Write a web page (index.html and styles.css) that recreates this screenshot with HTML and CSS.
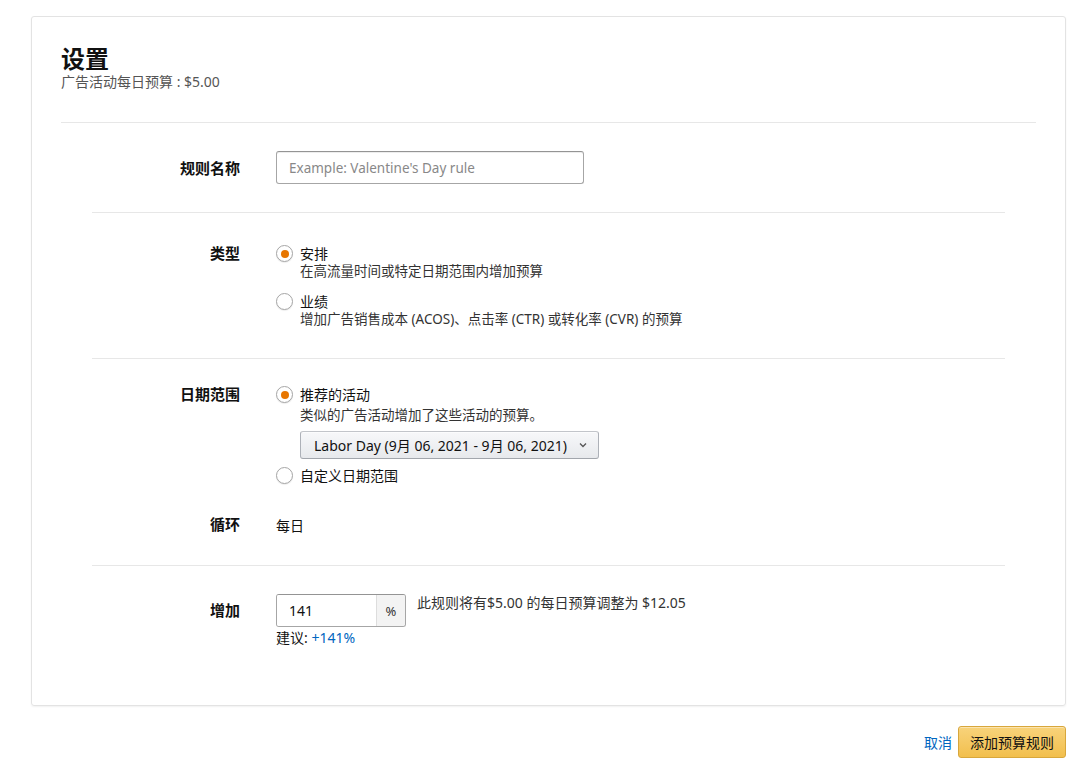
FILE: index.html
```html
<!DOCTYPE html>
<html lang="zh">
<head>
  <meta charset="UTF-8">
  <title>设置</title>
  <link rel="stylesheet" href="styles.css">
</head>
<body>
  <div class="page">
    <div class="card">
      <div class="card-head">
        <h2 class="title">设置</h2>
        <div class="subtitle">广告活动每日预算 : $5.00</div>
      </div>

      <div class="rows">
        <!-- 规则名称 -->
        <div class="row row-name">
          <div class="label">规则名称</div>
          <div class="field">
            <input class="text-input" type="text" placeholder="Example: Valentine's Day rule">
          </div>
        </div>

        <!-- 类型 -->
        <div class="row row-type">
          <div class="label">类型</div>
          <div class="field">
            <div class="radio-item">
              <span class="radio checked"></span>
              <div class="radio-text">
                <div class="radio-title">安排</div>
                <div class="radio-desc">在高流量时间或特定日期范围内增加预算</div>
              </div>
            </div>
            <div class="radio-item">
              <span class="radio"></span>
              <div class="radio-text">
                <div class="radio-title">业绩</div>
                <div class="radio-desc">增加广告销售成本 (ACOS)、点击率 (CTR) 或转化率 (CVR) 的预算</div>
              </div>
            </div>
          </div>
        </div>

        <!-- 日期范围 + 循环 -->
        <div class="row row-date">
          <div class="sub-row">
            <div class="label">日期范围</div>
            <div class="field">
              <div class="radio-item">
                <span class="radio checked"></span>
                <div class="radio-text">
                  <div class="radio-title">推荐的活动</div>
                  <div class="radio-desc">类似的广告活动增加了这些活动的预算。</div>
                  <div class="select">
                    <span>Labor Day (9月 06, 2021 - 9月 06, 2021)</span>
                    <svg class="chev" width="8" height="6" viewBox="0 0 8 6"><path d="M1 1.5 L4 4.5 L7 1.5" fill="none" stroke="#555" stroke-width="1.3"/></svg>
                  </div>
                </div>
              </div>
              <div class="radio-item">
                <span class="radio"></span>
                <div class="radio-text">
                  <div class="radio-title">自定义日期范围</div>
                </div>
              </div>
            </div>
          </div>
          <div class="sub-row repeat">
            <div class="label">循环</div>
            <div class="field value">每日</div>
          </div>
        </div>

        <!-- 增加 -->
        <div class="row row-inc">
          <div class="label">增加</div>
          <div class="field">
            <div class="inc-line">
              <div class="input-group">
                <input class="pct-input" type="text" value="141">
                <span class="addon">%</span>
              </div>
              <div class="inc-note">此规则将有$5.00 的每日预算调整为 $12.05</div>
            </div>
            <div class="suggest">建议: <a href="#">+141%</a></div>
          </div>
        </div>
      </div>
    </div>

    <div class="actions">
      <a class="cancel" href="#">取消</a>
      <button class="btn-primary">添加预算规则</button>
    </div>
  </div>
</body>
</html>
```

FILE: styles.css
```css
* { box-sizing: border-box; }
html, body { margin: 0; background: #fff; }
body {
  font-family: "Noto Sans", "Noto Sans CJK SC", sans-serif;
  font-size: 14px;
  color: #111;
}

.page { padding: 16px 14px 0 31px; }

.card {
  border: 1px solid #e3e3e3;
  border-radius: 3px;
  box-shadow: 0 1px 2px rgba(0, 0, 0, 0.06);
  padding-bottom: 58px;
}

.card-head {
  margin: 0 29px;
  padding: 28px 0 30px;
  border-bottom: 1px solid #e7e7e7;
}
.title {
  margin: 0;
  font-size: 24px;
  line-height: 27px;
  font-weight: 700;
}
.subtitle { font-size: 14px; line-height: 20px; color: #555; }

.rows { margin: 0 60px; }

.row { border-bottom: 1px solid #e7e7e7; }
.row:last-child { border-bottom: 0; }
.row, .sub-row { display: flex; }
.row-date { flex-direction: column; }

.label {
  width: 148px;
  flex: none;
  margin-right: 36px;
  text-align: right;
  font-size: 15px;
  font-weight: 700;
  line-height: 20px;
}
.field { flex: 1; }

/* 规则名称 */
.row-name { padding: 28px 0 28px; align-items: center; }
.text-input {
  width: 308px;
  height: 33px;
  padding: 0 12px;
  border: 1px solid #a6a6a6;
  border-top-color: #949494;
  border-radius: 3px;
  box-shadow: 0 1px 0 rgba(255,255,255,.5), 0 1px 0 rgba(0,0,0,.07) inset;
  font: inherit;
  font-size: 13.5px;
  color: #111;
  outline: none;
}
.text-input::placeholder { color: #888; }

/* radio */
.radio-item { display: flex; align-items: flex-start; }
.radio {
  width: 17px;
  height: 17px;
  flex: none;
  margin-right: 7px;
  border: 1px solid #a6a6a6;
  border-radius: 50%;
  background: #fff;
  position: relative;
  box-shadow: 0 1px 1px rgba(0,0,0,.08);
}
.radio.checked::after {
  content: "";
  position: absolute;
  left: 3.5px;
  top: 3.5px;
  width: 8px;
  height: 8px;
  border-radius: 50%;
  background: #e77600;
}
.radio-title { font-size: 14px; line-height: 17px; }
.radio-desc { font-size: 13.5px; line-height: 19px; color: #333; }

.row-type { padding: 32px 0 29px; }
.row-type .label { margin-top: -2px; }
.row-type .radio-item + .radio-item { margin-top: 12px; }

/* 日期范围 */
.row-date { padding: 27px 0 30px; }
.row-date .label { margin-top: -2px; }
.row-date .radio-desc { margin-top: 3px; }
.select {
  display: inline-flex;
  align-items: center;
  height: 28px;
  margin: 6px 0 8px;
  padding: 0 11px 0 13px;
  border: 1px solid #adb1b8;
  border-top-color: #c2c5ca;
  border-bottom-color: #a2a6ac;
  border-radius: 3px;
  background: linear-gradient(to bottom, #f7f8fa, #e7e9ec);
  box-shadow: 0 1px 0 rgba(255,255,255,.6) inset;
  font-size: 14px;
  color: #111;
}
.select span { margin-right: 12px; }
.chev { display: block; }

.repeat { margin-top: 31px; align-items: center; }
.value { font-size: 14px; }

/* 增加 */
.row-inc { padding: 28px 0 0; }
.row-inc .label { margin-top: 6px; }
.inc-line { display: flex; align-items: flex-start; }
.input-group {
  display: flex;
  width: 130px;
  height: 33px;
  border: 1px solid #a6a6a6;
  border-top-color: #949494;
  border-radius: 3px;
  overflow: hidden;
}
.pct-input {
  width: 99px;
  border: 0;
  padding: 0 12px;
  font: inherit;
  font-size: 14px;
  color: #111;
  outline: none;
}
.addon {
  flex: 1;
  display: flex;
  align-items: center;
  justify-content: center;
  border-left: 1px solid #ddd;
  background: #f3f3f3;
  font-size: 13px;
  color: #333;
}
.inc-note { margin-left: 11px; line-height: 18px; color: #333; }
.suggest { margin-top: 2px; line-height: 18px; }
.suggest a { color: #0066c0; text-decoration: none; }

/* actions */
.actions {
  display: flex;
  justify-content: flex-end;
  align-items: center;
  margin-top: 20px;
}
.cancel { color: #0066c0; text-decoration: none; margin-right: 6px; }
.btn-primary {
  height: 32px;
  padding: 0 11px;
  border: 1px solid #d8a73c;
  border-radius: 3px;
  background: linear-gradient(to bottom, #f8d37b, #f2bf4d);
  box-shadow: 0 1px 0 rgba(255,255,255,.4) inset;
  font: inherit;
  font-size: 14px;
  color: #111;
}
```
